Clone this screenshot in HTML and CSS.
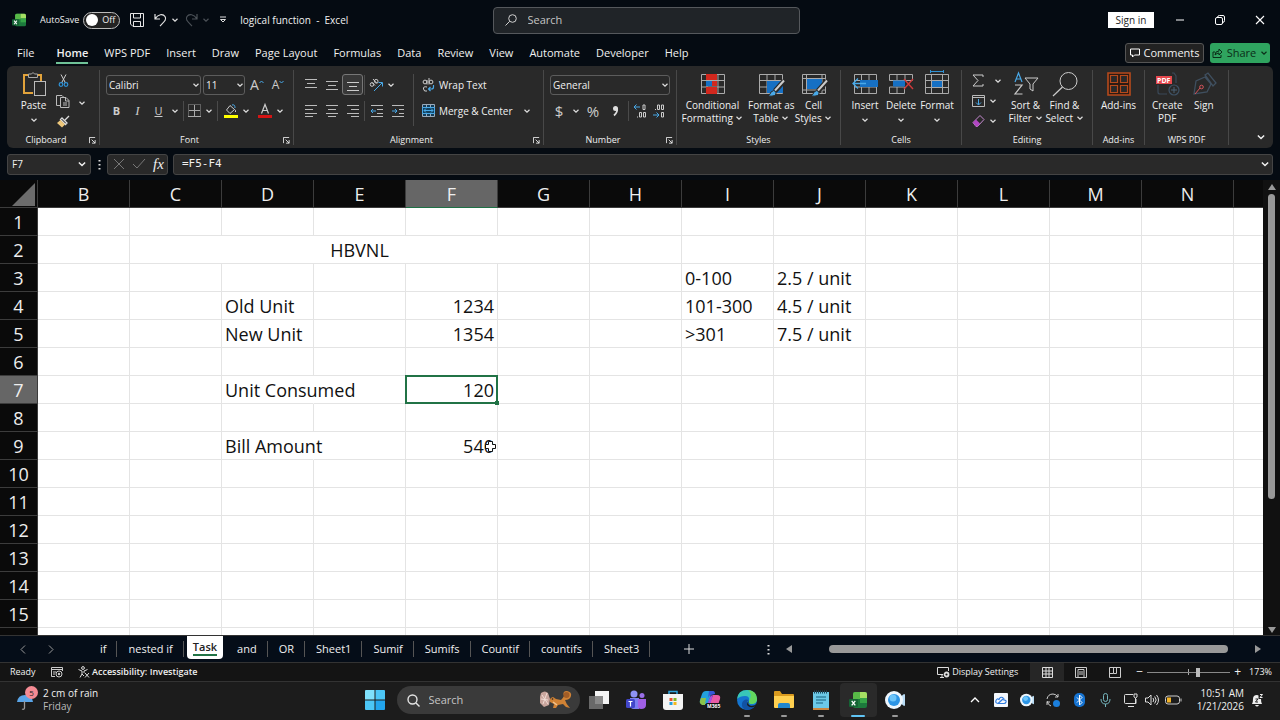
FILE: index.html
```html
<!DOCTYPE html>
<html lang="en">
<head>
<meta charset="utf-8">
<title>logical function - Excel</title>
<link rel="stylesheet" href="styles.css">
</head>
<body>
<svg class="defs" aria-hidden="true">
  <symbol id="chev" viewBox="0 0 8 8"><path d="M1.5 2.8 4 5.2 6.500 2.800" fill="none" stroke="currentColor" stroke-width="1.200"/></symbol>
  <symbol id="launch" viewBox="0 0 8 8"><path d="M.5 7V.5H7M3 3l4 4M7 3.500V7H3.500" fill="none" stroke="currentColor"/></symbol>
  <symbol id="excel" viewBox="0 0 18 18"><rect x="4" y="1" width="14" height="16" rx="2" fill="#1c7a3c"/><path d="M6 1h5v7H4V3q0-2 2-2z" fill="#58b947"/><path d="M11 1h5q2 0 2 2v4h-7z" fill="#a5e063"/><path d="M11 7h7v5h-7z" fill="#36a647"/><rect y="8" width="9" height="8" rx="1" fill="#156334"/><path d="m2.700 9.800 3.600 4.600m0-4.600-3.600 4.600" stroke="#fff" stroke-width="1.300"/></symbol>
  <symbol id="cam" viewBox="0 0 20 20"><path d="m14 8 5-4q1 0 1 1v10q0 1-1 1l-5-4z" fill="#b9dcf5"/><circle cx="9" cy="10" r="9" fill="#eef6fc"/><circle cx="9" cy="10" r="6" fill="#2c95e6"/><circle cx="8" cy="8" r="3.500" fill="#6cc5fa"/></symbol>
</svg>

<header class="titlebar">
  <div class="title-left">
    <svg class="app-icon"><use href="#excel"/></svg>
    <label class="autosave"><span>AutoSave</span><span class="toggle"><input type="checkbox" aria-label="AutoSave"><i>Off</i></span></label>
    <button class="ic" aria-label="Save"><svg width="14" height="14" viewBox="0 0 14 14"><path d="M.5 .5h13v13H3L.5 11zM3.500.5v4.500h7V.500M3.500 13.500V8.500h7v5" fill="none" stroke="#e4e4e4"/></svg></button>
    <button class="ic undo" aria-label="Undo"><svg width="13" height="14" viewBox="0 0 13 14"><path d="M1 1v5h5M1 6C4 1 9 .5 11 3.500S10.500 8.500 6 13" fill="none" stroke="#e4e4e4" stroke-width="1.200"/></svg><svg class="ch"><use href="#chev"/></svg></button>
    <button class="ic redo" aria-label="Redo"><svg width="13" height="14" viewBox="0 0 13 14"><path d="M12 1v5H7M12 6C9 1 4 .5 2 3.500S2.500 8.500 7 13" fill="none" stroke="currentColor" stroke-width="1.200"/></svg><svg class="ch"><use href="#chev"/></svg></button>
    <button class="ic custom" aria-label="Customize toolbar"><svg width="8" height="8" viewBox="0 0 8 8"><path d="M1 1h6M1.500 3.500h5L4 6z" fill="none" stroke="#ddd"/></svg></button>
    <h1>logical function&nbsp; -&nbsp; Excel</h1>
  </div>
  <label class="search"><svg width="12" height="12" viewBox="0 0 12 12"><circle cx="7.500" cy="4.500" r="3.800" fill="none" stroke="#d0d0d0"/><path d="M4.700 7.300.5 11.500" stroke="#d0d0d0"/></svg><input type="text" placeholder="Search" aria-label="Search"></label>
  <div class="title-right">
    <button class="signin">Sign in</button>
    <button class="win" aria-label="Minimize"><svg width="10" height="10" viewBox="0 0 10 10"><path d="M1 5h8" stroke="#fff"/></svg></button>
    <button class="win" aria-label="Restore"><svg width="10" height="10" viewBox="0 0 10 10"><rect x=".5" y="2.500" width="7" height="7" rx="1.500" fill="none" stroke="#fff"/><path d="M2.500 2.500q0-2 2-2H8q1.500 0 1.500 1.500v3.500q0 2-2 2" fill="none" stroke="#fff"/></svg></button>
    <button class="win" aria-label="Close"><svg width="10" height="10" viewBox="0 0 10 10"><path d="m1 1 8 8M9 1 1 9" stroke="#fff" stroke-width="1.100"/></svg></button>
  </div>
</header>

<nav class="menubar">
  <a href="#">File</a><a href="#" class="active">Home</a><a href="#">WPS PDF</a><a href="#">Insert</a><a href="#">Draw</a><a href="#">Page Layout</a><a href="#">Formulas</a><a href="#">Data</a><a href="#">Review</a><a href="#">View</a><a href="#">Automate</a><a href="#">Developer</a><a href="#">Help</a>
  <span class="spacer"></span>
  <button class="comments"><svg width="10" height="10" viewBox="0 0 10 10"><path d="M.5 1h9v6H4.500L2.500 9V7h-2z" fill="none" stroke="#fff"/></svg>Comments</button>
  <button class="share"><svg width="11" height="10" viewBox="0 0 11 10"><path d="M3 4H1v5.500h8V7M3 7q0-4 4-4V1l3 3-3 3V5Q5 5 3 7" fill="none" stroke="#0b2d18"/></svg>Share<svg class="ch"><use href="#chev"/></svg></button>
</nav>

<section class="ribbon">
  <div class="group g-clip">
    <div class="tools">
      <button class="big"><svg width="26" height="28" viewBox="0 0 26 28"><path d="M8 5H3v18h9" fill="none" stroke="#e2a33b" stroke-width="2"/><path d="M16 5h4v6" fill="none" stroke="#e2a33b" stroke-width="2"/><path d="M7.500 7.500V4h3q1.500-3 3 0h3v3.500z" fill="#292929" stroke="#aaa"/><rect x="13.500" y="11.500" width="11" height="14" fill="#292929" stroke="#bbb"/></svg><span>Paste</span><svg class="ch"><use href="#chev"/></svg></button>
      <div class="col3">
        <button class="ic" aria-label="Cut"><svg width="11" height="13" viewBox="0 0 11 13"><path d="m3 .5 4.500 8.500M8 .5 3.500 9" stroke="#ccc"/><circle cx="3" cy="10.500" r="1.800" fill="none" stroke="#2f92d6" stroke-width="1.200"/><circle cx="8" cy="10.500" r="1.800" fill="none" stroke="#2f92d6" stroke-width="1.200"/></svg></button>
        <button class="ic" aria-label="Copy"><svg width="14" height="14" viewBox="0 0 14 14"><path d="M4.500 11.500h-4V1.500H6l2 2M4.500 3.500H10l3 3v7H4.500zM9.500 3.500V7H13M7 9h4M7 11h4" fill="none" stroke="#bbb"/></svg></button>
        <button class="ic" aria-label="Format Painter"><svg width="14" height="13" viewBox="0 0 14 13"><path d="m13 1-4 4M6 3l5 5-1.500 1.500-5-5z" fill="none" stroke="#ddd" stroke-width="1.300"/><path d="m4.500 5 4.500 4.500L6 12.500 1 8z" fill="#edc77b"/></svg></button>
      </div>
      <svg class="ch clip-ch"><use href="#chev"/></svg>
    </div>
    <h2 class="more">Clipboard<svg class="launch"><use href="#launch"/></svg></h2>
  </div>

  <div class="group g-font">
    <div class="tools rows">
      <div class="row">
        <span class="combo font-name"><select aria-label="Font"><option>Calibri</option></select><svg class="ch"><use href="#chev"/></svg></span>
        <span class="combo font-size"><select aria-label="Font size"><option>11</option></select><svg class="ch"><use href="#chev"/></svg></span>
        <button class="ic grow" aria-label="Increase font size"><b>A</b><svg width="5" height="4" viewBox="0 0 5 4"><path d="m.5 3 2-2 2 2" fill="none" stroke="#49a9e8"/></svg></button>
        <button class="ic grow small" aria-label="Decrease font size"><b>A</b><svg width="5" height="4" viewBox="0 0 5 4"><path d="m.5 1 2 2 2-2" fill="none" stroke="#49a9e8"/></svg></button>
      </div>
      <div class="row fmt">
        <button class="ic glyph"><b>B</b></button><button class="ic glyph ital"><i>I</i></button><button class="ic glyph under"><u>U</u></button><svg class="ch"><use href="#chev"/></svg>
        <span class="vr"></span>
        <button class="ic" aria-label="Borders"><svg width="13" height="13" viewBox="0 0 13 13"><path d="M.5.5h12v12H.5z" fill="none" stroke="#999" stroke-dasharray="1 1"/><path d="M0 12.500h13M6.500 1v11M1 6.500h11" stroke="#aaa"/></svg></button><svg class="ch"><use href="#chev"/></svg>
        <span class="vr"></span>
        <button class="ic fill" aria-label="Fill color"><svg width="14" height="14" viewBox="0 0 14 14"><path d="m6 1.500 4.500 4L6 9.500 2.500 6zM10.500 5.500Q12 6 11.500 8" fill="none" stroke="#ccc"/><path d="M8 1q3-1 3 3" fill="none" stroke="#49a9e8"/><path d="M0 11h14v3H0z" fill="#ff0"/></svg></button><svg class="ch"><use href="#chev"/></svg>
        <button class="ic color" aria-label="Font color"><svg width="14" height="14" viewBox="0 0 14 14"><path d="m3.500 9.500 3.500-9 3.500 9M4.500 6.500h5" fill="none" stroke="#ccc" stroke-width="1.200"/><path d="M0 11h14v3H0z" fill="#d41414"/></svg></button><svg class="ch"><use href="#chev"/></svg>
      </div>
    </div>
    <h2 class="more">Font<svg class="launch"><use href="#launch"/></svg></h2>
  </div>

  <div class="group g-align">
    <div class="tools align">
      <div class="rows">
        <div class="row">
          <button class="ic sq" aria-label="Top align"><svg width="14" height="14" viewBox="0 0 14 14"><path d="M1 1.500h12M3 5.500h8M1 9.500h12" stroke="#bbb"/></svg></button>
          <button class="ic sq" aria-label="Middle align"><svg width="14" height="14" viewBox="0 0 14 14"><path d="M1 3.500h12M3 7.500h8M1 11.500h12" stroke="#bbb"/></svg></button>
          <button class="ic sq on" aria-label="Bottom align"><svg width="14" height="14" viewBox="0 0 14 14"><path d="M1 4.500h12M3 8.500h8M1 12.500h12" stroke="#ccc"/></svg></button>
          <span class="vr"></span>
          <button class="ic sq" aria-label="Orientation"><svg width="15" height="14" viewBox="0 0 15 14"><circle cx="3" cy="6.500" r="1.800" fill="none" stroke="#ccc"/><path d="m3 4.500 3 3M4 1l4 4.500" stroke="#ccc"/><circle cx="7.200" cy="3.200" r="1.800" fill="none" stroke="#ccc"/><path d="m5 13 8-8M9.500 4.500H13.500V8.500" fill="none" stroke="#49a9e8"/></svg></button><svg class="ch"><use href="#chev"/></svg>
        </div>
        <div class="row">
          <button class="ic sq" aria-label="Align left"><svg width="14" height="14" viewBox="0 0 14 14"><path d="M1 1.500h12M1 5.500h8M1 9.500h12M1 12.500h8" stroke="#bbb"/></svg></button>
          <button class="ic sq" aria-label="Center"><svg width="14" height="14" viewBox="0 0 14 14"><path d="M1 1.500h12M3 5.500h8M1 9.500h12M3 12.500h8" stroke="#bbb"/></svg></button>
          <button class="ic sq" aria-label="Align right"><svg width="14" height="14" viewBox="0 0 14 14"><path d="M1 1.500h12M5 5.500h8M1 9.500h12M5 12.500h8" stroke="#bbb"/></svg></button>
          <span class="vr"></span>
          <button class="ic sq" aria-label="Decrease indent"><svg width="14" height="14" viewBox="0 0 14 14"><path d="M1 1.500h12M7 5.500h6M7 9.500h6M1 12.500h12" stroke="#bbb"/><path d="M6 7H1m2-2L1 7l2 2" fill="none" stroke="#49a9e8"/></svg></button>
          <button class="ic sq" aria-label="Increase indent"><svg width="14" height="14" viewBox="0 0 14 14"><path d="M1 1.500h12M8 5.500h5M8 9.500h5M1 12.500h12" stroke="#bbb"/><path d="M1 7h5M4 5l2 2-2 2" fill="none" stroke="#49a9e8"/></svg></button>
        </div>
      </div>
      <span class="vr tall"></span>
      <div class="rows wide">
        <button class="txt"><svg width="13" height="14" viewBox="0 0 13 14"><circle cx="3" cy="4" r="1.900" fill="none" stroke="#ccc"/><path d="M5 2v4.500M7 0v6.500M5 9Q1 8 1.500 11T5 13" fill="none" stroke="#ccc"/><circle cx="9" cy="4" r="1.900" fill="none" stroke="#ccc"/><path d="M11.500 7v2q0 2-2 2H6.500m2-2-2 2 2 2" fill="none" stroke="#49a9e8" stroke-width="1.200"/></svg>Wrap Text</button>
        <button class="txt"><svg width="13" height="13" viewBox="0 0 13 13"><path d="M.5.5h12v12H.5zM4.500.5v3M8.500.5v3M4.500 9.500v3M8.500 9.500v3" fill="#123c58" stroke="#9ab"/><path d="M.5 3.500h12v6H.5z" fill="#12415f" stroke="#49a9e8"/><path d="M2 6.500h9M4 4.500l-2 2 2 2M9 4.500l2 2-2 2" fill="none" stroke="#49a9e8"/></svg>Merge &amp; Center<svg class="ch push"><use href="#chev"/></svg></button>
      </div>
    </div>
    <h2 class="more">Alignment<svg class="launch"><use href="#launch"/></svg></h2>
  </div>

  <div class="group g-num">
    <div class="tools rows">
      <div class="row"><span class="combo number"><select aria-label="Number format"><option>General</option></select><svg class="ch"><use href="#chev"/></svg></span></div>
      <div class="row nums">
        <button class="ic sym">$</button><svg class="ch"><use href="#chev"/></svg><button class="ic sym">%</button><button class="ic sym" aria-label="Comma style"><svg width="7" height="12" viewBox="0 0 7 12"><circle cx="3.500" cy="3.500" r="2.500" fill="#ddd"/><path d="M5 3q1 4-3 7.500" fill="none" stroke="#ddd" stroke-width="1.800"/></svg></button>
        <span class="vr"></span>
        <button class="ic" aria-label="Increase decimal"><svg width="14" height="14" viewBox="0 0 14 14"><path d="M1 3h6M3.500.5 1 3l2.500 2.500" fill="none" stroke="#49a9e8"/><path d="M10 1h2v4.500h-2zM6.500 8.500h2V13h-2zM10.500 8.500h2V13h-2zM4 13h1" fill="none" stroke="#ccc"/></svg></button>
        <button class="ic" aria-label="Decrease decimal"><svg width="14" height="14" viewBox="0 0 14 14"><path d="M2 11h6M5.500 8.500 8 11l-2.500 2.500" fill="none" stroke="#49a9e8"/><path d="M6.500 1h2v4.500h-2zM10.500 1h2v4.500h-2zM10.500 8.500h2V13h-2zM4 5.500h1" fill="none" stroke="#ccc"/></svg></button>
      </div>
    </div>
    <h2 class="more">Number<svg class="launch"><use href="#launch"/></svg></h2>
  </div>

  <div class="group g-styles">
    <div class="tools">
      <button class="big"><svg width="26" height="28" viewBox="0 0 26 28"><path d="M1.500 4.500h23v19h-23zM1.500 10.500h23M1.500 17h23M7 4.500v19M18 4.500v19" fill="none" stroke="#aaa"/><path d="M6 4h11v6H6zM6 17h11v7H6z" fill="#d2281e"/><path d="M6 11h6v5H6z" fill="#1670c4"/><path d="M12 11h5v5h-5z" fill="#d2281e"/></svg><span>Conditional<br>Formatting <svg class="ch"><use href="#chev"/></svg></span></button>
      <button class="big"><svg width="26" height="28" viewBox="0 0 26 28"><path d="M1.500 4.500h23v19h-23zM1.500 10.500h23M1.500 17h23M9 4.500v19M17 4.500v19" fill="none" stroke="#aaa"/><path d="M9 11h16v12H9z" fill="#1670c4"/><path d="M26 11 17 21" stroke="#292929" stroke-width="5"/><path d="M26 10.500 17 20.500" stroke="#ccc" stroke-width="2"/><path d="M10 26q2-1 3-4 3-3 5 0 1 5-8 4z" fill="#49a9e8" stroke="#292929"/></svg><span>Format as<br>Table <svg class="ch"><use href="#chev"/></svg></span></button>
      <button class="big"><svg width="26" height="28" viewBox="0 0 26 28"><path d="M1.500 4.500h23v19h-23zM1.500 8.500h23M1.500 20h23M5.500 4.500v19M21 4.500v19" fill="none" stroke="#aaa"/><path d="M6 9h15v10H6z" fill="#1670c4"/><path d="M26 11 17 21" stroke="#292929" stroke-width="5"/><path d="M26 10.500 17 20.500" stroke="#ccc" stroke-width="2"/><path d="M10 26q2-1 3-4 3-3 5 0 1 5-8 4z" fill="#49a9e8" stroke="#292929"/></svg><span>Cell<br>Styles <svg class="ch"><use href="#chev"/></svg></span></button>
    </div>
    <h2>Styles</h2>
  </div>

  <div class="group g-cells">
    <div class="tools">
      <button class="big"><svg width="26" height="28" viewBox="0 0 26 28"><path d="M2.500 4.500h22v19h-22zM2.500 10.500h22M2.500 17h22M9.500 4.500v19M17 4.500v19" fill="none" stroke="#aaa"/><path d="M8 10h18v7H8z" fill="#1670c4"/><path d="M14 13.500H1M6 8.500l-5 5 5 5" fill="none" stroke="#49a9e8" stroke-width="1.300"/></svg><span>Insert</span><svg class="ch"><use href="#chev"/></svg></button>
      <button class="big"><svg width="26" height="28" viewBox="0 0 26 28"><path d="M1.500 4.500h23v6h-23zM1.500 17h15v6.500h-15zM9 4.500v6M17 4.500v6M9 17v6.500M1.500 17v6" fill="none" stroke="#aaa"/><path d="M5 10.500h12v6H5z" fill="#1670c4"/><path d="m16 9 9 10M25 9l-9 10" stroke="#d0393b" stroke-width="1.400"/></svg><span>Delete</span><svg class="ch"><use href="#chev"/></svg></button>
      <button class="big"><svg width="26" height="28" viewBox="0 0 26 28"><path d="M1.500 4.500h23v19h-23zM1.500 10.500h23M1.500 17.500h23M7.500 4.500v19M18.500 4.500v19" fill="none" stroke="#aaa"/><path d="M8 11h10v6H8z" fill="#1670c4"/><path d="M6.500 0v3M19.500 0v3M6.500 1.500h13" stroke="#2f92d6"/></svg><span>Format</span><svg class="ch"><use href="#chev"/></svg></button>
    </div>
    <h2>Cells</h2>
  </div>

  <div class="group g-edit">
    <div class="tools">
      <div class="col3 edit3">
        <button class="ic sum" aria-label="AutoSum"><svg width="12" height="13" viewBox="0 0 12 13"><path d="M11 3V1H1l5 5.500L1 12h10v-2" fill="none" stroke="#ccc"/></svg><svg class="ch"><use href="#chev"/></svg></button>
        <button class="ic" aria-label="Fill"><svg width="13" height="12" viewBox="0 0 13 12"><path d="M.5.5h12v11H.5zM.5 2.500h12" fill="none" stroke="#bbb"/><path d="M6.500 4v6M4 7.500 6.500 10 9 7.500" fill="none" stroke="#49a9e8"/></svg><svg class="ch"><use href="#chev"/></svg></button>
        <button class="ic" aria-label="Clear"><svg width="13" height="12" viewBox="0 0 13 12"><path d="m1 7.500 7-7 4 4-6.500 7H4z" fill="none" stroke="#c68ad0"/><path d="m1 7.500 3-3 4 4-2.500 3H4z" fill="#b146c2"/></svg><svg class="ch"><use href="#chev"/></svg></button>
      </div>
      <button class="big"><svg width="26" height="28" viewBox="0 0 26 28"><path d="m2 12 3.500-9L9 12M3 9h5" fill="none" stroke="#49a9e8" stroke-width="1.200"/><path d="M2 15h7l-7 9h7.500" fill="none" stroke="#ccc" stroke-width="1.200"/><path d="M12 8h13l-5 6v7l-3-2v-5z" fill="none" stroke="#ccc"/></svg><span>Sort &amp;<br>Filter <svg class="ch"><use href="#chev"/></svg></span></button>
      <button class="big"><svg width="26" height="28" viewBox="0 0 26 28"><circle cx="16.500" cy="11" r="8.500" fill="none" stroke="#ccc"/><path d="M10.500 17 1 26" stroke="#ccc" stroke-width="1.200"/></svg><span>Find &amp;<br>Select <svg class="ch"><use href="#chev"/></svg></span></button>
    </div>
    <h2>Editing</h2>
  </div>

  <div class="group g-add">
    <div class="tools">
      <button class="big"><svg width="26" height="28" viewBox="0 0 26 28"><path d="M2 3h22v22H2z" fill="#2e1a12" stroke="#b64a1c" stroke-width="1.600"/><path d="M4.500 5.500h7v7h-7zM14.500 5.500h7v7h-7zM4.500 15.500h7v7h-7zM14.500 15.500h7v7h-7z" fill="#292929" stroke="#b64a1c" stroke-width="1.200"/></svg><span>Add-ins</span></button>
    </div>
    <h2>Add-ins</h2>
  </div>

  <div class="group g-wps">
    <div class="tools">
      <button class="big"><svg width="26" height="28" viewBox="0 0 26 28"><path d="M18 3h2l2 3v7M4 15v7q0 2 2 2h7" fill="none" stroke="#3a4858" stroke-width="1.200"/><circle cx="20" cy="20" r="5" fill="none" stroke="#3e5266" stroke-width="1.200"/><path d="M20 17v6M17 20h6" stroke="#4b6277"/><rect x="2" y="6" width="16" height="8" fill="#e5484d"/><text x="3" y="13" font-size="7" font-weight="700" fill="#fff">PDF</text></svg><span>Create<br>PDF</span></button>
      <button class="big"><svg width="26" height="28" viewBox="0 0 26 28"><path d="m3 24 2-13 9-4 6 7-4 8zM14 5l3-2 8 10-3 3z" fill="none" stroke="#3f4f5f" stroke-width="1.300"/><path d="m4 24 5-6" stroke="#d4545a"/><circle cx="10.500" cy="17" r="1.800" fill="none" stroke="#d4545a"/></svg><span>Sign</span></button>
    </div>
    <h2>WPS PDF</h2>
  </div>
  <button class="ic collapse" aria-label="Collapse ribbon"><svg width="10" height="10"><use href="#chev"/></svg></button>
</section>

<section class="formula">
  <label class="namebox"><input type="text" value="F7" aria-label="Name box"><svg width="10" height="10"><use href="#chev"/></svg></label>
  <svg class="dots" width="3" height="11" viewBox="0 0 3 11"><path d="M.5 1h2v1.500h-2zM.5 5h2v1.500h-2zM.5 9h2v1.500h-2z" fill="#ddd"/></svg>
  <div class="fx">
    <button class="ic" aria-label="Cancel"><svg width="12" height="12" viewBox="0 0 12 12"><path d="m1 1 10 10M11 1 1 11" stroke="#777"/></svg></button>
    <button class="ic" aria-label="Enter"><svg width="14" height="12" viewBox="0 0 14 12"><path d="m1 6 4 4L13 1" fill="none" stroke="#777"/></svg></button>
    <button class="ic fxi">fx</button>
  </div>
  <label class="fbar"><input type="text" value="=F5-F4" aria-label="Formula bar"><svg width="10" height="10"><use href="#chev"/></svg></label>
</section>

<main class="sheet">
  <div class="grid-wrap">
    <table>
      <colgroup><col class="c-head"><col span="14"></colgroup>
      <thead><tr><th class="corner"><svg width="23" height="23" viewBox="0 0 23 23"><path d="M23 0v23H0z" fill="#6c6c6c"/></svg></th><th>B</th><th>C</th><th>D</th><th>E</th><th class="sel">F</th><th>G</th><th>H</th><th>I</th><th>J</th><th>K</th><th>L</th><th>M</th><th>N</th><th></th></tr></thead>
      <tbody>
        <tr><th>1</th><td></td><td></td><td></td><td></td><td></td><td></td><td></td><td></td><td></td><td></td><td></td><td></td><td></td><td></td></tr>
        <tr><th>2</th><td></td><td colspan="5" class="merged">HBVNL</td><td></td><td></td><td></td><td></td><td></td><td></td><td></td><td></td></tr>
        <tr><th>3</th><td></td><td></td><td></td><td></td><td></td><td></td><td></td><td>0-100</td><td>2.5 / unit</td><td></td><td></td><td></td><td></td><td></td></tr>
        <tr><th>4</th><td></td><td></td><td>Old Unit</td><td></td><td class="n">1234</td><td></td><td></td><td>101-300</td><td>4.5 / unit</td><td></td><td></td><td></td><td></td><td></td></tr>
        <tr><th>5</th><td></td><td></td><td>New Unit</td><td></td><td class="n">1354</td><td></td><td></td><td>&gt;301</td><td>7.5 / unit</td><td></td><td></td><td></td><td></td><td></td></tr>
        <tr><th>6</th><td></td><td></td><td></td><td></td><td></td><td></td><td></td><td></td><td></td><td></td><td></td><td></td><td></td><td></td></tr>
        <tr><th class="sel">7</th><td></td><td></td><td class="over">Unit Consumed</td><td></td><td class="n cursor">120</td><td></td><td></td><td></td><td></td><td></td><td></td><td></td><td></td><td></td></tr>
        <tr><th>8</th><td></td><td></td><td></td><td></td><td></td><td></td><td></td><td></td><td></td><td></td><td></td><td></td><td></td><td></td></tr>
        <tr><th>9</th><td></td><td></td><td class="over">Bill Amount</td><td></td><td class="n pointer">540<svg width="13" height="13" viewBox="0 0 13 13"><path d="M4.500 1.500h4v3h3v4h-3v3h-4v-3h-3v-4h3z" fill="#fff" stroke="#111"/></svg></td><td></td><td></td><td></td><td></td><td></td><td></td><td></td><td></td><td></td></tr>
        <tr><th>10</th><td></td><td></td><td></td><td></td><td></td><td></td><td></td><td></td><td></td><td></td><td></td><td></td><td></td><td></td></tr>
        <tr><th>11</th><td></td><td></td><td></td><td></td><td></td><td></td><td></td><td></td><td></td><td></td><td></td><td></td><td></td><td></td></tr>
        <tr><th>12</th><td></td><td></td><td></td><td></td><td></td><td></td><td></td><td></td><td></td><td></td><td></td><td></td><td></td><td></td></tr>
        <tr><th>13</th><td></td><td></td><td></td><td></td><td></td><td></td><td></td><td></td><td></td><td></td><td></td><td></td><td></td><td></td></tr>
        <tr><th>14</th><td></td><td></td><td></td><td></td><td></td><td></td><td></td><td></td><td></td><td></td><td></td><td></td><td></td><td></td></tr>
        <tr><th>15</th><td></td><td></td><td></td><td></td><td></td><td></td><td></td><td></td><td></td><td></td><td></td><td></td><td></td><td></td></tr>
        <tr><th></th><td></td><td></td><td></td><td></td><td></td><td></td><td></td><td></td><td></td><td></td><td></td><td></td><td></td><td></td></tr>
      </tbody>
    </table>
  </div>
  <div class="vscroll">
    <svg width="8" height="6" viewBox="0 0 8 6"><path d="M4 0l4 6H0z" fill="#999"/></svg>
    <div class="vthumb"></div>
    <svg width="8" height="6" viewBox="0 0 8 6"><path d="M4 6l4-6H0z" fill="#999"/></svg>
  </div>
</main>

<nav class="sheets">
  <div class="arrows"><button class="ic" aria-label="Previous sheet"><svg width="6" height="9" viewBox="0 0 6 9"><path d="M5 .5 1 4.500l4 4" fill="none" stroke="#999"/></svg></button><button class="ic" aria-label="Next sheet"><svg width="6" height="9" viewBox="0 0 6 9"><path d="m1 .5 4 4-4 4" fill="none" stroke="#999"/></svg></button></div>
  <div class="tablist"><button>if</button><button>nested if</button><button class="current"><span>Task</span></button><button>and</button><button>OR</button><button>Sheet1</button><button>Sumif</button><button>Sumifs</button><button>Countif</button><button>countifs</button><button>Sheet3</button></div>
  <button class="ic add" aria-label="New sheet"><svg width="10" height="10" viewBox="0 0 10 10"><path d="M5 0v10M0 5h10" stroke="#ddd"/></svg></button>
  <div class="hscroll">
    <svg width="3" height="11" viewBox="0 0 3 11"><path d="M.5 1h2v1.500h-2zM.5 5h2v1.500h-2zM.5 9h2v1.500h-2z" fill="#ddd"/></svg>
    <svg class="tri" width="6" height="8" viewBox="0 0 6 8"><path d="M6 0v8L0 4z" fill="#999"/></svg>
    <div class="hthumb"></div>
    <svg width="6" height="8" viewBox="0 0 6 8"><path d="M0 0v8l6-4z" fill="#999"/></svg>
  </div>
</nav>

<footer class="status">
  <span class="ready">Ready</span>
  <svg width="12" height="12" viewBox="0 0 12 12"><path d="M4 10.500H.5v-9h11V5M.5 3.500h11M2 6h3M2 8h2" fill="none" stroke="#ccc"/><circle cx="8" cy="8" r="3" fill="none" stroke="#ccc"/><circle cx="8" cy="8" r="1.200" fill="#ccc"/></svg>
  <button class="access"><svg width="12" height="12" viewBox="0 0 12 12"><circle cx="5" cy="2" r="1.400" fill="none" stroke="#ddd"/><path d="M.5 3.500 4 5v3l-2 3.500M9.500 3.500 6 5v2M4 8l2 2M7 7l4 4.500M11 7l-4 4.500" fill="none" stroke="#ddd"/></svg>Accessibility: Investigate</button>
  <span class="spacer"></span>
  <button class="display"><svg width="13" height="12" viewBox="0 0 13 12"><path d="M6 8.500H.5v-7h11V5M3 11.500h4M5 9v2" fill="none" stroke="#ddd"/><circle cx="9.500" cy="8.500" r="2" fill="none" stroke="#ddd" stroke-width="1.800"/></svg>Display Settings</button>
  <button class="view on" aria-label="Normal"><svg width="11" height="11" viewBox="0 0 11 11"><path d="M.5.5h10v10H.5zM.5 4h10M.5 7h10M4 .5v10M7 .5v10" fill="none" stroke="#ddd"/></svg></button>
  <button class="view" aria-label="Page layout"><svg width="12" height="11" viewBox="0 0 12 11"><path d="M.5.5h11v10H.5zM3 2.500h6v8M3 2.500v8M4 5h4M4 7h4" fill="none" stroke="#ccc"/></svg></button>
  <button class="view" aria-label="Page break preview"><svg width="12" height="11" viewBox="0 0 12 11"><path d="M.5.5h11v10H.5zM4.500 .5v6h3v-6M.5 6.500h4" fill="none" stroke="#ccc"/></svg></button>
  <label class="zoom"><span>−</span><input type="range" min="0" max="100" value="62" aria-label="Zoom"><span>+</span></label>
  <span class="pct">173%</span>
</footer>

<footer class="taskbar">
  <div class="weather">
    <span class="umb"><svg width="18" height="18" viewBox="0 0 18 18"><path d="M1 9Q2 2 9 2t8 7z" fill="#5aa5e8"/><path d="M8.500 8v7q-.5 2-2.500 1" fill="none" stroke="#999" stroke-width="1.300"/></svg><b>5</b></span>
    <div><p>2 cm of rain</p><p class="dim">Friday</p></div>
  </div>
  <div class="apps">
    <button class="app" aria-label="Start"><svg width="20" height="20" viewBox="0 0 20 20"><path d="M0 1q0-1 1-1h8.500v9.500H0z" fill="#7fe0fb"/><path d="M10.500 0H19q1 0 1 1v8.500h-9.500zM0 10.500h9.500V20H1q-1 0-1-1z" fill="#4cc6f6"/><path d="M10.500 10.500H20V19q0 1-1 1h-8.500z" fill="#22a5ee"/></svg></button>
    <label class="tsearch"><svg width="13" height="13" viewBox="0 0 13 13"><circle cx="5.500" cy="5.500" r="4.500" fill="none" stroke="#e4e4e4" stroke-width="1.400"/><path d="m9 9 3.500 3.500" stroke="#e4e4e4" stroke-width="1.400"/></svg><input type="text" placeholder="Search" aria-label="Search taskbar"><svg width="32" height="18" viewBox="0 0 32 18"><path d="M2 2q4-3 7 0l2 6-1 6-5 2-4-4V6z" fill="#c9a59d"/><path d="m3 4 6 9M8 2 4 13M2 8l7 1" stroke="#f0dcd5"/><path d="M22 9q2-2 3-4-2-5 3-5 5 1 4 5-1 4-6 4 1 4 5 8l-4-1-3-3-5 1-2 3h-3l1-4-4-2q-1-4 3-5l3 2z" fill="#d08235"/><circle cx="27.500" cy="4" r="3" fill="#a35d26"/><circle cx="13.500" cy="8" r=".8" fill="#222"/><path d="m14 11 4 3" stroke="#f2c490" stroke-width="1.500"/></svg></label>
    <button class="app" aria-label="Task view"><svg width="20" height="20" viewBox="0 0 20 20"><path d="M6 1h14v13H6z" fill="#f4f4f4"/><path d="M0 6h14v13H0z" fill="#777" opacity=".85"/></svg></button>
    <button class="app" aria-label="Teams"><svg width="20" height="20" viewBox="0 0 20 20"><circle cx="8" cy="4" r="3.500" fill="#8d92f4"/><circle cx="16" cy="5.500" r="2.500" fill="#9a6fe8"/><path d="M4 8h9v11H8q-4 0-4-4z" fill="#7b7ff0"/><path d="M12 9h8v6q0 4-5 4-3 0-3-3z" fill="#a05fe6"/><rect y="9" width="9" height="9" rx="1.500" fill="#4146c9"/><path d="M2.500 11.500h4M4.500 11.500v5" stroke="#fff" stroke-width="1.200"/></svg></button>
    <button class="app" aria-label="Store"><svg width="20" height="20" viewBox="0 0 20 20"><path d="M6 5V1.500h8V5" fill="none" stroke="#2ea3dc" stroke-width="1.500"/><path d="M0 4h20v13q0 3-3 3H3q-3 0-3-3z" fill="#f4f4f4"/><path d="M6.500 8h3v3h-3z" fill="#e6502c"/><path d="M10.500 8h3v3h-3z" fill="#7cb728"/><path d="M6.500 12h3v3h-3z" fill="#249fdc"/><path d="M10.500 12h3v3h-3z" fill="#f5b81c"/></svg></button>
    <button class="app" aria-label="M365 Copilot"><svg width="22" height="20" viewBox="0 0 22 20"><path d="M7 1h6l-4 13H4q-4 0-3-4l2-6q1-3 4-3z" fill="#23a1dc"/><path d="M2 8h5L6 15H3q-3-2-2-4z" fill="#8bc34a"/><path d="M10 1h4q2 0 2 3l-4 1q-2 0-3 3z" fill="#3557d8"/><path d="M14 5h4q4 0 3 4l-2 6h-9z" fill="#e85aa5"/><path d="m14 5-3 10H8l3-8q1-2 3-2z" fill="#a64ddf"/><rect x="7" y="13" width="14" height="7" rx="1" fill="#111"/><text x="8" y="18" font-size="5" font-weight="700" fill="#fff">M365</text></svg></button>
    <button class="app open" aria-label="Edge"><svg width="20" height="20" viewBox="0 0 20 20"><circle cx="10" cy="10" r="10" fill="#1474cf"/><path d="M0 9Q1 0 10 0t10 9q0 5-6 5-3-1-2-3 1-5-4-5-5 0-8 3z" fill="#38c6b8"/><path d="M11 0q9 1 9 9 0 5-6 5-3-1-2-3 4-7-1-11z" fill="#62d75e"/><path d="M12 10q-3 1-1 4t7 2q-3 4-8 4-6-1-5-7 2-5 7-3z" fill="#1252a3"/><path d="M12 11q-2 3 1 4.500 4 1 7-2-1 2-2 3-5 2-8-1.500 0-3 2-4z" fill="#1c1c1c"/></svg></button>
    <button class="app open" aria-label="File Explorer"><svg width="20" height="18" viewBox="0 0 20 18"><path d="M0 1q0-1 1-1h5l2 3h11q1 0 1 1v4H0z" fill="#d99a1e"/><path d="M0 5h20v11q0 1-1 1H1q-1 0-1-1z" fill="#ffd050"/><path d="M4 17v-3q0-2 2-2h8q2 0 2 2v3z" fill="#2187cf"/></svg></button>
    <button class="app open" aria-label="Notepad"><svg width="16" height="20" viewBox="0 0 16 20"><path d="M0 2h16v18H0z" fill="#6bc9e8"/><path d="M0 18h16v2H0z" fill="#c98640"/><path d="M1 2h14" stroke="#20465a" stroke-width="3" stroke-dasharray="1 1"/><path d="M3 7h10M3 10h10M3 13h7" stroke="#17617e" stroke-width="1.200"/></svg></button>
    <button class="app open active" aria-label="Excel"><svg width="18" height="18"><use href="#excel"/></svg></button>
    <button class="app open" aria-label="Zoom camera"><svg width="20" height="20"><use href="#cam"/></svg></button>
  </div>
  <div class="tray">
    <button class="ti" aria-label="Hidden icons"><svg width="10" height="6" viewBox="0 0 10 6"><path d="m1 5 4-4 4 4" fill="none" stroke="#fff" stroke-width="1.300"/></svg></button>
    <span class="ti"><svg width="14" height="14" viewBox="0 0 14 14"><rect width="14" height="14" rx="1" fill="#f4f8fd"/><path d="M4 10.500q-3-.5-2-3t3-1q1-3 3.500-2 2 1 1.500 2.500 2.500 0 2 2-.5 1.500-2 1.500zL9 6" fill="none" stroke="#2f7ce0" stroke-width="1.200"/></svg></span>
    <span class="ti"><svg width="14" height="14"><use href="#cam"/></svg></span>
    <span class="ti"><svg width="14" height="14" viewBox="0 0 14 14"><path d="M1 6q1-5 6-5 3 0 5 3M12 1v3H9M1 8q1 4 4 5M1 12V9h3" fill="none" stroke="#ccc"/><circle cx="10.500" cy="10.500" r="3.500" fill="#1b7fdd"/></svg></span>
    <span class="ti"><svg width="11" height="14" viewBox="0 0 11 14"><rect width="11" height="14" rx="5" fill="#1673d1"/><path d="m3 4.500 5 5L5.500 12V2L8 4.500l-5 5" fill="none" stroke="#fff"/></svg></span>
    <span class="ti"><svg width="11" height="14" viewBox="0 0 11 14"><rect x="3.500" y=".5" width="4" height="8" rx="2" fill="none" stroke="#75b5bd"/><path d="M1 6q0 5 4.500 5T10 6M5.500 11v3" fill="none" stroke="#75b5bd"/></svg></span>
    <span class="ti"><svg width="14" height="14" viewBox="0 0 14 14"><path d="M9 1.500H1.500q-1 0-1 1v7q0 1 1 1H12V6M4 13.500h6M10 1h3v3q-1.500 2-3 0zM11.500 5v5" fill="none" stroke="#ddd"/></svg></span>
    <span class="ti narrow"><svg width="14" height="12" viewBox="0 0 14 12"><path d="M.5 4h2.500l3-3v10l-3-3H.5zM8 4q1.500 2 0 4M9.700 2.500q3 3.500 0 7M11.500 1q4 5 0 10" fill="none" stroke="#ddd"/></svg></span>
    <span class="ti"><svg width="17" height="10" viewBox="0 0 17 10"><rect x=".5" y="1" width="14" height="8" rx="2.500" fill="none" stroke="#ccc"/><rect x="2" y="2.500" width="4" height="5" fill="#f3b327"/><path d="M16 3.500v3" stroke="#ccc"/></svg></span>
    <div class="clock"><time>10:51 AM</time><time>1/21/2026</time></div>
    <svg width="12" height="13" viewBox="0 0 12 13"><path d="M1 10q1-1 1-5 0-4 4-4 1 0 1.500.5V5H10q0 4 1 5zM4 11h4q-2 3-4 0z" fill="#eee"/><path d="M9 .5h2.500L9 3.500h2.500" fill="none" stroke="#eee"/><path d="M4.500 5H7L4.500 8H7" fill="none" stroke="#222"/></svg>
  </div>
</footer>
</body>
</html>
```
FILE: styles.css
```css
* { box-sizing: border-box; }
body {
  margin: 0;
  height: 100vh;
  display: flex;
  flex-direction: column;
  overflow: hidden;
  background: #050b12;
  color: #f0f0f0;
  font: 10px/14px "Open Sans", "Noto Sans", sans-serif;
}
.defs { position: absolute; width: 0; height: 0; }
svg { display: block; flex: none; overflow: visible; }
button, input, select { font: inherit; color: inherit; background: none; border: 0; padding: 0; margin: 0; }
input, select { min-width: 0; outline: 0; }
a { color: inherit; text-decoration: none; }
h1, h2, p { margin: 0; font: inherit; }
.ic { display: flex; align-items: center; justify-content: center; }
.ch { width: 8px; height: 8px; color: #e0e0e0; }
.spacer { flex: 1; }

/* title bar */
.titlebar { display: flex; align-items: center; height: 40px; flex: none; padding-left: 12px; }
.title-left { flex: 1; display: flex; align-items: center; }
.app-icon { width: 14px; height: 14px; margin-right: 14px; }
.autosave { display: flex; align-items: center; gap: 4px; font-size: 9px; margin-right: 10px; }
.toggle { position: relative; display: flex; width: 37px; height: 17px; }
.toggle input { appearance: none; width: 37px; height: 17px; border: 1px solid #bbb; border-radius: 9px; background: #222; }
.toggle input::before { content: ""; display: block; width: 12px; height: 12px; margin: 1px 2px; border-radius: 6px; background: #fff; }
.toggle i { position: absolute; right: 5px; top: 1px; font-style: normal; }
.undo, .redo { gap: 4px; margin-left: 10px; }
.redo { margin-left: 6px; color: #4c5258; }
.redo .ch { color: #4c5258; }
.custom { margin-left: 9px; }
h1 { margin-left: 13px; white-space: nowrap; }
.search { width: 307px; height: 27px; display: flex; align-items: center; gap: 11px; padding-left: 11px; border: 1px solid #55585c; border-radius: 4px; background: #202428; font-size: 11px; }
.search input { flex: 1; }
::placeholder { color: #c4c4c4; opacity: 1; }
.title-right { flex: 1; display: flex; justify-content: flex-end; align-items: center; }
.signin { width: 46px; height: 16px; background: #fff; color: #222; margin-right: 6px; }
.win { width: 40px; height: 30px; display: grid; place-items: center; }

/* menu tabs */
.menubar { display: flex; align-items: center; gap: 16px; height: 26px; flex: none; padding: 0 10px 0 17px; font-size: 11px; }
.menubar a { line-height: 19px; border-bottom: 2px solid transparent; }
.menubar a:first-child { margin-right: 6px; }
.menubar .active { font-weight: 600; border-color: #6fc297; }
.comments, .share { display: flex; align-items: center; justify-content: center; gap: 4px; height: 20px; border-radius: 3px; }
.comments { width: 79px; border: 1px solid #555; background: #222; margin-right: -10px; }
.share { width: 60px; background: #2fa45f; color: #0b2d18; }
.share .ch { color: #0b2d18; }

/* ribbon */
.ribbon { display: flex; height: 82px; flex: none; margin: 0 7px; padding: 4px 0 3px; border-radius: 6px; background: #292929; }
.group { display: flex; flex-direction: column; flex: none; border-right: 1px solid #484848; }
.group h2 { display: flex; justify-content: center; position: relative; font-size: 9px; line-height: 10px; }
.group .more { padding-right: 14px; }
.launch { position: absolute; right: 3px; top: 2px; width: 7px; height: 7px; }
.tools { flex: 1; display: flex; }
.g-clip { width: 93px; }
.g-font { width: 194px; }
.g-align { width: 250px; }
.g-num { width: 133px; }
.g-styles { width: 164px; }
.g-cells { width: 121px; }
.g-edit { width: 131px; }
.g-add { width: 52px; }
.g-wps { width: 84px; }
.big { display: flex; flex-direction: column; align-items: center; line-height: 13px; white-space: nowrap; flex: 1; }
.big span { margin-top: 1px; }
.big span .ch { display: inline-block; }
.big > .ch { margin-top: 4px; }
.g-clip .tools { padding-left: 8px; }
.g-clip .big { flex: 0 0 37px; }
.col3 { display: flex; flex-direction: column; justify-content: space-around; padding-bottom: 4px; width: 22px; }
.clip-ch { align-self: center; margin-left: 4px; }
.rows { display: flex; flex-direction: column; gap: 5px; padding-top: 4px; }
.row { display: flex; align-items: center; height: 21px; }
.g-font .rows { padding-left: 6px; }
.combo { position: relative; height: 20px; border: 1px solid #5c5c5c; border-radius: 3px; }
.combo select { appearance: none; width: 100%; height: 18px; padding-left: 2px; }
.combo .ch { position: absolute; right: 0; top: 5px; pointer-events: none; }
.font-name { width: 95px; }
.font-size { width: 42px; margin: 0 4px 0 2px; }
.grow { width: 16px; align-items: flex-start; color: #ccc; }
.grow b { font-weight: 400; font-size: 14px; }
.grow svg { margin-top: 2px; }
.small { margin-left: 5px; }
.small b { font-size: 12px; }
.fmt { gap: 4px; padding-left: 2px; }
.fill { margin-left: 2px; }
.color { margin-left: 4px; }
.glyph { width: 17px; font-size: 11px; color: #ccc; }
.ital { font-family: "Liberation Serif", serif; font-size: 13px; }
.vr { width: 1px; height: 20px; background: #4a4a4a; }
.g-align .tools { padding-left: 6px; }
.sq { width: 21px; height: 21px; }
.on.sq { border: 1px solid #777; border-radius: 3px; background: #383838; }
.align .row .vr { margin: 0 1px; }
.tall { height: 52px; margin: 4px 8px 0 5px; }
.align .wide { flex: 1; }
.txt { display: flex; align-items: center; gap: 4px; height: 21px; }
.push { margin-left: auto; margin-right: 12px; }
.g-num .rows { padding-left: 6px; }
.number { width: 120px; }
.nums { gap: 4px; }
.sym { width: 18px; font-size: 15px; color: #ccc; }
.g-styles .big { flex: 0 0 46px; }
.g-styles .big:first-child { flex-basis: 71px; }
.g-styles .big:last-child { flex-basis: 38px; }
.g-cells .tools { padding: 0 6px; }
.edit3 { width: 44px; padding-left: 10px; }
.edit3 .ic { justify-content: flex-start; gap: 4px; }
.edit3 .sum { gap: 10px; }
.g-edit .big { flex: 0 0 39px; }
.g-wps .tools { padding: 0 6px 0 4px; }
.collapse { margin: auto 7px 3px auto; }

/* formula bar */
.formula { display: flex; align-items: center; height: 32px; flex: none; padding: 0 7px; }
.namebox, .fx, .fbar { display: flex; align-items: center; height: 21px; border: 1px solid #444; border-radius: 3px; background: #292929; }
.namebox { width: 84px; padding: 0 3px 0 4px; }
.namebox input { flex: 1; }
.dots { margin: 0 6px 0 7px; }
.fx { width: 61px; gap: 7px; padding: 0 5px; margin-right: 5px; }
.fxi { font: italic 15px/16px "Liberation Serif", serif; }
.fbar { flex: 1; padding: 0 2px 0 8px; font-family: "DejaVu Sans Mono", monospace; font-size: 11px; }
.fbar input { flex: 1; }

/* worksheet */
.sheet { flex: 1; min-height: 0; display: flex; background: #0a0a0a; }
.grid-wrap { flex: 1; min-width: 0; overflow: hidden; background: #fff; }
table { table-layout: fixed; width: 1326px; border-collapse: separate; border-spacing: 0; font-size: 18px; line-height: 26px; color: #111; }
col { width: 92px; }
.c-head { width: 38px; }
th { height: 28px; padding: 0; background: #0a0a0a; color: #eee; font-weight: 400; border-right: 1px solid #3c3c3c; border-bottom: 1px solid #3c3c3c; }
td { height: 28px; padding: 0 3px; white-space: nowrap; border-right: 1px solid #e4e4e4; border-bottom: 1px solid #e4e4e4; }
.corner svg { margin: 2px 2px 0 auto; }
th.sel { background: #666; }
thead .sel { border-bottom-color: #1e7145; }
.merged { text-align: center; }
.over { border-right-color: #fff; overflow: visible; }
.n { text-align: right; }
.cursor, .pointer { position: relative; }
.cursor::before { content: ""; position: absolute; inset: -1px; border: 2px solid #217346; }
.cursor::after { content: ""; position: absolute; right: -2px; bottom: -2px; width: 4px; height: 4px; background: #217346; }
.pointer svg { position: absolute; right: 0; top: 8px; }
.vscroll { width: 17px; display: flex; flex-direction: column; align-items: center; padding: 4px 0 2px; background: #111; }
.vthumb { width: 7px; flex: 0 0 68%; margin: 4px 0 auto; border-radius: 4px; background: #999; }

/* sheet tabs */
.sheets { display: flex; height: 27px; flex: none; border-top: 1px solid #333; background: #050d18; font-size: 11px; }
.arrows { display: flex; gap: 22px; width: 89px; padding-left: 20px; }
.tablist { display: flex; align-items: flex-start; }
.tablist button { height: 26px; padding: 0 11px; display: flex; align-items: center; }
.tablist button:not(.current) { background: linear-gradient(#555, #555) right center / 1px 16px no-repeat; }
.tablist .current { height: 23px; padding: 0 6px; margin: 0 3px; background: #fff; color: #222; border-radius: 0 0 4px 4px; font-weight: 600; }
.current span { border-bottom: 2px solid #217346; }
.add { margin-left: 34px; }
.hscroll { flex: 0 0 494px; margin-left: auto; margin-right: 19px; display: flex; align-items: center; }
.tri { margin: 0 37px 0 16px; }
.hthumb { flex: 1; height: 8px; margin-right: 27px; border-radius: 4px; background: #999; }

/* status bar */
.status { display: flex; align-items: center; height: 20px; flex: none; padding: 0 8px 0 10px; border-top: 1px solid #333; border-bottom: 1px solid #333; background: #141414; font-size: 9px; }
.ready { width: 41px; }
.access, .display { display: flex; align-items: center; gap: 2px; }
.access { margin-left: 15px; font-weight: 600; }
.display { margin-right: 12px; }
.view { width: 34px; height: 18px; display: grid; place-items: center; }
.view.on { background: #262626; }
.zoom { display: flex; align-items: center; gap: 4px; margin-left: 4px; font-size: 12px; }
.zoom input { appearance: none; width: 83px; height: 12px; background: linear-gradient(#888, #888) center / 100% 1px no-repeat, linear-gradient(#aaa, #aaa) 50% 50% / 1px 6px no-repeat; }
.zoom input::-webkit-slider-thumb { appearance: none; width: 4px; height: 9px; background: #bbb; }
.pct { width: 31px; text-align: right; }

/* task bar */
.taskbar { display: grid; grid-template-columns: 1fr auto 1fr; align-items: center; height: 38px; flex: none; padding: 0 10px 2px 0; background: #1c1c1c; }
.weather { display: flex; align-items: center; gap: 9px; padding-left: 16px; line-height: 13px; }
.umb { position: relative; padding-top: 4px; }
.umb b { position: absolute; left: 9px; top: -3px; width: 13px; height: 13px; border-radius: 7px; background: #f58b94; color: #222; text-align: center; font-size: 8px; font-weight: 400; }
.dim { color: #bbb; }
.apps { display: flex; align-items: center; }
.app { position: relative; width: 37px; height: 34px; display: grid; place-items: center; }
.app.active { background: #2a2a2a; border-radius: 4px; }
.open::after { content: ""; position: absolute; left: 50%; bottom: 0; width: 6px; height: 2px; margin-left: -3px; border-radius: 1px; background: #999; }
.open.active::after { width: 14px; margin-left: -7px; background: #60c4f5; }
.tsearch { display: flex; align-items: center; gap: 9px; width: 183px; height: 28px; margin: 0 1px 0 3px; padding: 0 9px 0 10px; border-radius: 14px; background: #3a3a3a; font-size: 11px; }
.tsearch input { flex: 1; }
.tray { display: flex; align-items: center; justify-content: flex-end; margin-right: 7px; }
.ti { display: grid; place-items: center; width: 26px; }
.ti.narrow { width: 16px; }
.clock { display: flex; flex-direction: column; align-items: flex-end; width: 58px; line-height: 13px; margin-right: 7px; }
```
